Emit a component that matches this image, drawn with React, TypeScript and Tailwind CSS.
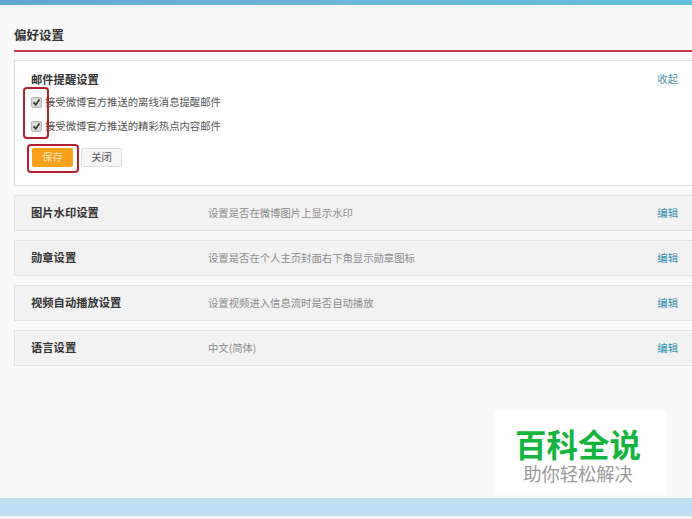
const font = "font-['Noto_Sans_CJK_SC','Liberation_Sans',sans-serif]";

const rows = [
  { title: "图片水印设置", desc: "设置是否在微博图片上显示水印" },
  { title: "勋章设置", desc: "设置是否在个人主页封面右下角显示勋章图标" },
  { title: "视频自动播放设置", desc: "设置视频进入信息流时是否自动播放" },
  { title: "语言设置", desc: "中文(简体)" },
];

function CheckRow({ label }: { label: string }) {
  return (
    <div className="flex items-center h-[24px]">
      <span className="flex items-center justify-center w-[11px] h-[11px] rounded-[2px] bg-[#d8d8d8] border border-[#b5b5b5]">
        <svg viewBox="0 0 12 12" className="w-[10px] h-[10px]">
          <path d="M2 6.5 L5 9.5 L10 2.5" fill="none" stroke="#333" strokeWidth="2.2" />
        </svg>
      </span>
      <span className="ml-[3px] text-[10.35px] text-[#555]">{label}</span>
    </div>
  );
}

export default function App() {
  return (
    <div className={`relative w-[692px] h-[519px] overflow-hidden bg-[#f9f9f9] flex flex-col ${font}`}>
      <div className="h-[5px] bg-gradient-to-r from-[#5fa8d3] via-[#6cb6de] to-[#62bfe0]" />

      <div className="flex-1 pl-[14px]">
        <div className="h-[47px] flex items-end pb-[7px] border-b-2 border-[#c8374d]">
          <h1 className="text-[12.5px] leading-[16px] font-bold text-[#333]">偏好设置</h1>
        </div>

        <div className="mt-[8px] h-[126px] bg-white border border-[#dcdcdc] border-r-0 pl-[16px] pr-[14px] pt-[11px]">
          <div className="flex justify-between items-center h-[14px]">
            <span className="text-[11.3px] font-bold text-[#333]">邮件提醒设置</span>
            <a className="text-[10.35px] text-[#4a90ad]">收起</a>
          </div>
          <div className="mt-[4px]">
            <CheckRow label="接受微博官方推送的离线消息提醒邮件" />
            <CheckRow label="接受微博官方推送的精彩热点内容邮件" />
          </div>
          <div className="mt-[10px] ml-[1px] flex gap-[8px]">
            <button className="w-[41px] h-[19px] rounded-[2px] bg-[#f9a11b] text-[#fde3b8] text-[10.35px] leading-none">保存</button>
            <button className="w-[41px] h-[19px] rounded-[2px] bg-[#f6f6f6] border border-[#dedede] text-[#555] text-[10.35px] leading-none">关闭</button>
          </div>
        </div>

        <div className="mt-[9px] flex flex-col gap-[9px]">
          {rows.map((r) => (
            <div key={r.title} className="flex items-center h-[36px] bg-[#f2f2f2] border border-[#e2e2e2] border-r-0 pl-[16px] pr-[14px]">
              <span className="w-[177px] pb-[1px] text-[11.3px] font-bold text-[#333]">{r.title}</span>
              <span className="flex-1 text-[10.35px] text-[#8a8a8a]">{r.desc}</span>
              <a className="text-[10.35px] text-[#2f8fb0]">编辑</a>
            </div>
          ))}
        </div>
      </div>

      <div className="h-[18px] bg-[#bfe0f3]" />
      <div className="h-[3px] bg-[#f6f6f6]" />

      {/* annotations drawn over the screenshot */}
      <div className="absolute left-[23px] top-[87px] w-[26px] h-[52px] rounded-[4px] border-2 border-[#b3202e]" />
      <div className="absolute left-[27px] top-[144px] w-[52px] h-[29px] rounded-[4px] border-2 border-[#b3202e]" />

      {/* watermark */}
      <div className="absolute left-[494px] top-[410px] w-[173px] h-[85px] bg-white flex flex-col items-center pt-[15px] pr-[5px]">
        <div className="text-[31.5px] leading-[36px] font-bold text-[#13b53c]">百科全说</div>
        <div className="text-[18.3px] leading-[22px] mt-[1px] text-[#999]">助你轻松解决</div>
      </div>
    </div>
  );
}
